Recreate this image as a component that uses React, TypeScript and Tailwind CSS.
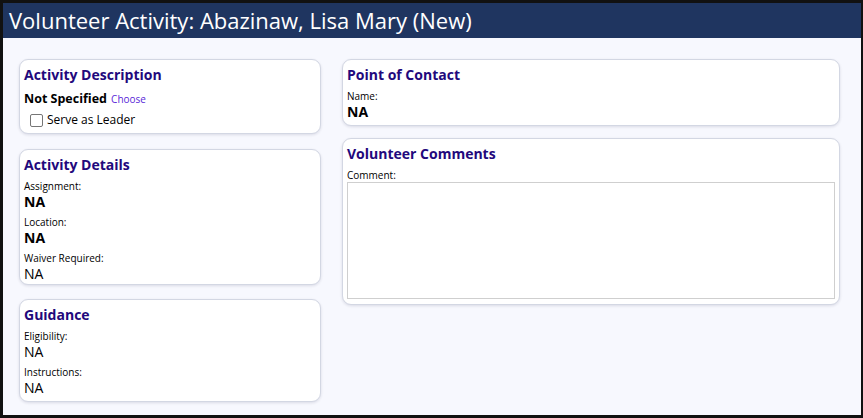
import React from "react";

function Card({
  title,
  children,
  pb = "pb-[3px]",
  extra = "",
}: {
  title: string;
  children?: React.ReactNode;
  pb?: string;
  extra?: string;
}) {
  return (
    <div
      className={`bg-white border border-[#d3d7e3] rounded-[9px] shadow-[0_1px_3px_rgba(20,20,60,0.12)] px-[4px] pt-[4px] ${pb} ${extra}`}
    >
      <div className="text-[14px] font-bold leading-[22px] mb-[-2px] text-[#22087c]">{title}</div>
      {children}
    </div>
  );
}

function Label({ children }: { children: React.ReactNode }) {
  return <div className="text-[10px] leading-[14px] mt-[5px] text-black">{children}</div>;
}

function BoldValue({ children }: { children: React.ReactNode }) {
  return <div className="text-[14px] font-bold leading-[17px] text-black">{children}</div>;
}

function Value({ children }: { children: React.ReactNode }) {
  return <div className="text-[14px] leading-[17px] text-black">{children}</div>;
}

export default function App() {
  return (
    <div className="w-[863px] h-[418px] overflow-hidden bg-[#111] font-['Open_Sans',sans-serif]">
      <div className="flex flex-col mt-[3px] ml-[3px] mr-[2px] h-[412px] bg-[#f7f8fe]">
        <div className="h-[35px] bg-[#1f3560] text-white text-[22px] leading-[35px] pl-[6px] shrink-0">
          Volunteer Activity: Abazinaw, Lisa Mary (New)
        </div>
        <div className="flex gap-[21px] pl-[16px] pr-[21px] pt-[21px]">
          <div className="w-[302px] flex flex-col">
            <Card title="Activity Description" pb="pb-[3px]">
              <div className="mt-[3px] leading-[20px] text-black">
                <span className="text-[12.5px] font-bold">Not Specified</span>{" "}
                <span className="text-[10px] text-[#5a1fd8]">Choose</span>
              </div>
              <div className="mt-[1px] flex items-center h-[20px] pl-[6px]">
                <span className="w-[13px] h-[13px] border border-[#767676] rounded-[2px] bg-white mr-[4px]" />
                <span className="text-[12px] text-black">Serve as Leader</span>
              </div>
            </Card>
            <Card title="Activity Details" pb="pb-[2px]" extra="mt-[15px]">
              <Label>Assignment:</Label>
              <BoldValue>NA</BoldValue>
              <Label>Location:</Label>
              <BoldValue>NA</BoldValue>
              <Label>Waiver Required:</Label>
              <Value>NA</Value>
            </Card>
            <Card title="Guidance" pb="pb-[5px]" extra="mt-[14px]">
              <Label>Eligibility:</Label>
              <Value>NA</Value>
              <Label>Instructions:</Label>
              <Value>NA</Value>
            </Card>
          </div>
          <div className="w-[498px] flex flex-col gap-[12px]">
            <Card title="Point of Contact" pb="pb-[5px]">
              <Label>Name:</Label>
              <BoldValue>NA</BoldValue>
            </Card>
            <Card title="Volunteer Comments" pb="pb-[5px]">
              <Label>Comment:</Label>
              <div className="h-[117px] border border-[#cfcfcf] bg-white" />
            </Card>
          </div>
        </div>
      </div>
    </div>
  );
}
